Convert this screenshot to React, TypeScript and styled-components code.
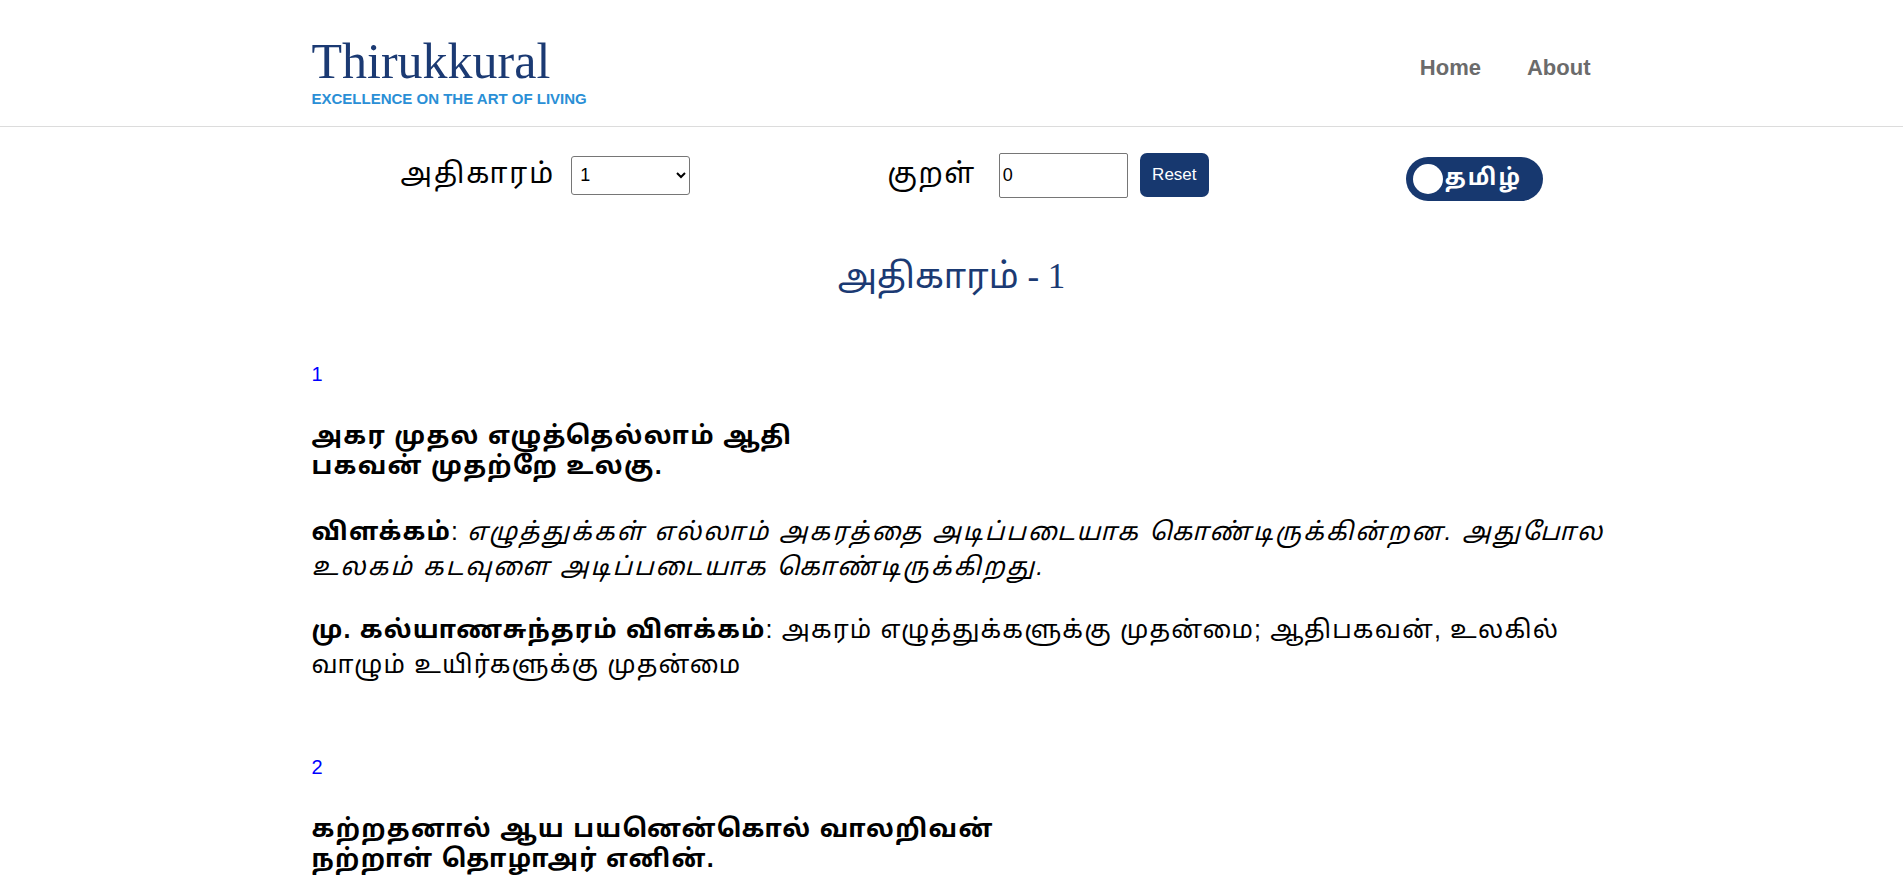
import React, { useState } from "react";
import styled, { createGlobalStyle } from "styled-components";

const GlobalStyle = createGlobalStyle`
  html, body { margin: 0; padding: 0; background: #fff; }
  body {
    font-family: "Liberation Sans", Arial, "Noto Sans Tamil", sans-serif;
    color: #000;
  }
  * { box-sizing: border-box; }
`;

const HeaderBar = styled.header`
  border-bottom: 1px solid #dcdcdc;
`;

const Container = styled.div`
  width: 1280px;
  margin: 0 auto;
`;

const HeaderInner = styled(Container)`
  height: 126px;
  display: flex;
  align-items: flex-start;
  justify-content: space-between;
`;

const Brand = styled.div`
  display: flex;
  flex-direction: column;
  padding-top: 36px;
`;

const BrandTitle = styled.div`
  font-family: "Liberation Serif", "Times New Roman", serif;
  font-size: 50px;
  line-height: 50px;
  color: #1b3a73;
`;

const BrandTag = styled.div`
  font-size: 15px;
  line-height: 17px;
  font-weight: 700;
  color: #2a8fd6;
  margin-top: 4px;
`;

const Nav = styled.nav`
  display: flex;
  gap: 46px;
  padding-top: 55px;
  padding-right: 1px;
`;

const NavLink = styled.a`
  font-size: 22px;
  line-height: 26px;
  font-weight: 700;
  color: #6b6b6b;
  text-decoration: none;
  cursor: pointer;
`;

const Controls = styled(Container)`
  display: flex;
  align-items: center;
  padding-left: 89px;
  gap: 197px;
  height: 96px;
`;

const Group = styled.div<{ $gap: number }>`
  display: flex;
  align-items: center;
  gap: ${(p) => p.$gap}px;
`;

const Label = styled.span<{ $ls: number }>`
  font-size: 28px;
  letter-spacing: ${(p) => p.$ls}px;
  color: #000;
`;

const Select = styled.select`
  width: 119px;
  height: 39px;
  font-size: 18px;
  font-family: "Liberation Sans", Arial, sans-serif;
  border: 1px solid #767676;
  border-radius: 3px;
  padding: 0 4px;
  background: #fff;
  color: #000;
`;

const NumInput = styled.input`
  width: 129px;
  height: 45px;
  font-size: 18px;
  font-family: "Liberation Sans", Arial, sans-serif;
  border: 1px solid #767676;
  border-radius: 2px;
  padding: 0 3px;
  color: #000;
`;

const ResetButton = styled.button`
  width: 69px;
  height: 44px;
  border: none;
  border-radius: 7px;
  background: #17386f;
  color: #fff;
  font-size: 17px;
  font-family: "Liberation Sans", Arial, sans-serif;
  cursor: pointer;
`;

const Toggle = styled.button`
  width: 137px;
  height: 44px;
  margin-top: 8px;
  border: none;
  border-radius: 22px;
  background: #17386f;
  display: flex;
  align-items: center;
  padding: 0 0 0 7px;
  gap: 2px;
  cursor: pointer;
`;

const Knob = styled.span`
  width: 30px;
  height: 30px;
  border-radius: 50%;
  background: #fff;
  flex: none;
`;

const ToggleText = styled.span`
  color: #fff;
  font-weight: 700;
  font-size: 23px;
  letter-spacing: 2px;
  font-family: "Liberation Sans", Arial, "Noto Sans Tamil", sans-serif;
`;

const ChapterTitle = styled.h2`
  margin: 0;
  text-align: center;
  font-family: "Liberation Serif", "Times New Roman", "Noto Sans Tamil", serif;
  font-weight: 400;
  font-size: 35px;
  color: #1b3a73;
  line-height: 42px;
  padding-top: 33px;
`;

const KuralList = styled(Container)`
  padding-top: 64px;
`;

const Kural = styled.section`
  margin-bottom: 73px;
`;

const KuralNo = styled.div`
  font-size: 20px;
  color: #0000ff;
  line-height: 24px;
`;

const Verse = styled.p`
  margin: 34px 0 0;
  font-size: 25px;
  font-weight: 700;
  letter-spacing: 1.3px;
  line-height: 30px;
`;

const Explain = styled.p<{ $top: number }>`
  width: 1300px;
  margin: ${(p) => p.$top}px 0 0;
  font-size: 25px;
  letter-spacing: 1.15px;
  line-height: 35px;
`;

const Em = styled.i`
  letter-spacing: 2.1px;
`;

const kurals = [
  {
    n: 1,
    l1: "அகர முதல எழுத்தெல்லாம் ஆதி",
    l2: "பகவன் முதற்றே உலகு.",
    v: "எழுத்துக்கள் எல்லாம் அகரத்தை அடிப்படையாக கொண்டிருக்கின்றன. அதுபோல உலகம் கடவுளை அடிப்படையாக கொண்டிருக்கிறது.",
    m: "அகரம் எழுத்துக்களுக்கு முதன்மை; ஆதிபகவன், உலகில் வாழும் உயிர்களுக்கு முதன்மை",
  },
  {
    n: 2,
    l1: "கற்றதனால் ஆய பயனென்கொல் வாலறிவன்",
    l2: "நற்றாள் தொழாஅர் எனின்.",
    v: "தூய அறிவு வடிவாக விளங்கும் இறைவனுடைய நல்ல திருவடிகளைத் தொழாமல் இருப்பாரானால், அவர் கற்ற கல்வியினால் ஆகிய பயன் என்ன?",
    m: "தன்னைவிட அறிவில் மூத்த பெருந்தகையாளர்களை வணங்கி வாழ்த்துவதே கல்வியின் பயன்",
  },
];

export default function App() {
  const [chapter, setChapter] = useState("1");
  const [kural, setKural] = useState("0");
  return (
    <>
      <GlobalStyle />
      <HeaderBar>
        <HeaderInner>
          <Brand>
            <BrandTitle>Thirukkural</BrandTitle>
            <BrandTag>EXCELLENCE ON THE ART OF LIVING</BrandTag>
          </Brand>
          <Nav>
            <NavLink>Home</NavLink>
            <NavLink>About</NavLink>
          </Nav>
        </HeaderInner>
      </HeaderBar>
      <Controls>
        <Group $gap={16}>
          <Label $ls={2}>அதிகாரம்</Label>
          <Select value={chapter} onChange={(e) => setChapter(e.target.value)}>
            {Array.from({ length: 133 }, (_, i) => (
              <option key={i + 1} value={String(i + 1)}>
                {i + 1}
              </option>
            ))}
          </Select>
        </Group>
        <Group $gap={23}>
          <Label $ls={1.5}>குறள்</Label>
          <Group $gap={12}>
            <NumInput value={kural} onChange={(e) => setKural(e.target.value)} />
            <ResetButton onClick={() => setKural("0")}>Reset</ResetButton>
          </Group>
        </Group>
        <Toggle>
          <Knob />
          <ToggleText>தமிழ்</ToggleText>
        </Toggle>
      </Controls>
      <ChapterTitle>அதிகாரம் - {chapter}</ChapterTitle>
      <KuralList>
        {kurals.map((k) => (
          <Kural key={k.n}>
            <KuralNo>{k.n}</KuralNo>
            <Verse>
              {k.l1}
              <br />
              {k.l2}
            </Verse>
            <Explain $top={34}>
              <b>விளக்கம்</b>: <Em>{k.v}</Em>
            </Explain>
            <Explain $top={28}>
              <b>மு. கல்யாணசுந்தரம் விளக்கம்</b>: {k.m}
            </Explain>
          </Kural>
        ))}
      </KuralList>
    </>
  );
}
